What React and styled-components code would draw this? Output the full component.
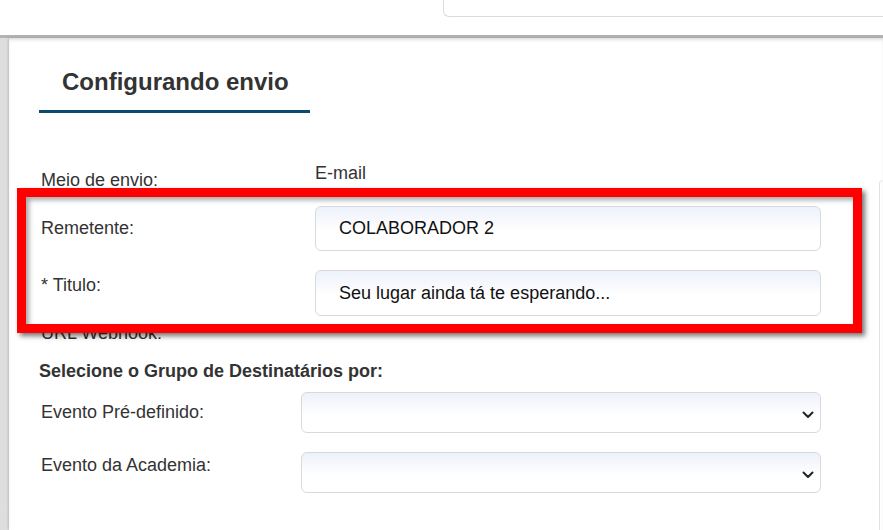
import styled, { createGlobalStyle } from 'styled-components'

const GlobalStyle = createGlobalStyle`
    html, body {
        margin: 0;
        padding: 0;
        background: #ffffff;
        font-family: "Liberation Sans", Arial, sans-serif;
        overflow: hidden;
    }
`;

function Chevron() {
    return (
        <svg width="12" height="8" viewBox="0 0 12 8">
            <path d="M1.5 1.5 L6 6 L10.5 1.5" fill="none" stroke="#222" strokeWidth="2" strokeLinecap="round" strokeLinejoin="round" />
        </svg>
    )
}

function App() {
    return (
        <Page>
            <GlobalStyle />
            <TopBar>
                <TopBox />
            </TopBar>
            <Backdrop>
                <Panel>
                    <Content>
                        <Form>
                            <TitleTab>Configurando envio</TitleTab>

                            <InfoRow>
                                <Label width={274} offset={7}>Meio de envio:</Label>
                                <Value>E-mail</Value>
                            </InfoRow>

                            <FieldRow gap={16}>
                                <Label width={274} offset={12}>Remetente:</Label>
                                <Field height={45}>COLABORADOR 2</Field>
                            </FieldRow>

                            <FieldRow gap={19}>
                                <Label width={274} offset={5}>* Titulo:</Label>
                                <Field height={46}>Seu lugar ainda tá te esperando...</Field>
                            </FieldRow>

                            <FieldRow gap={7}>
                                <Label width={274} offset={0}>URL Webhook:</Label>
                            </FieldRow>

                            <SectionTitle>Selecione o Grupo de Destinatários por:</SectionTitle>

                            <FieldRow gap={11}>
                                <Label width={260} offset={10}>Evento Pré-definido:</Label>
                                <Select>
                                    <Chevron />
                                </Select>
                            </FieldRow>

                            <FieldRow gap={19}>
                                <Label width={260} offset={3}>Evento da Academia:</Label>
                                <Select>
                                    <Chevron />
                                </Select>
                            </FieldRow>
                        </Form>
                        <SideEdge />
                    </Content>
                    <Highlight />
                </Panel>
            </Backdrop>
        </Page>
    )
}

export default App

const Page = styled.div`
    width: 883px;
    height: 530px;
    overflow: hidden;
    background: #ffffff;
`;

const TopBar = styled.div`
    height: 35px;
    display: flex;
    flex-direction: row;
    align-items: flex-start;
`;

const TopBox = styled.div`
    margin-left: 443px;
    flex: 1;
    height: 16px;
    border: 1px solid #dcdcdc;
    border-top: none;
    border-right: none;
    border-bottom-left-radius: 6px;
`;

const Backdrop = styled.div`
    border-top: 3px solid #b3b3b3;
    background: linear-gradient(to right, #dedede, #cfcfcf);
    padding-left: 9px;
    height: 492px;
`;

const Panel = styled.div`
    position: relative;
    background: #ffffff;
    height: 100%;
    box-shadow: inset 0 3px 4px -2px rgba(0, 0, 0, 0.18), -1px 0 2px rgba(0, 0, 0, 0.15);
`;

const Content = styled.div`
    display: flex;
    flex-direction: row;
`;

const Form = styled.div`
    flex: 1;
    display: flex;
    flex-direction: column;
    padding-left: 32px;
    padding-right: 58px;
    color: #333333;
`;

const SideEdge = styled.div`
    width: 3px;
    margin-top: 142px;
    height: 360px;
    border-left: 1px solid #e2e2e2;
    border-top: 1px solid #ececec;
    border-top-left-radius: 5px;
`;

const TitleTab = styled.div`
    margin-left: -2px;
    width: 248px;
    padding: 30px 0 14px 23px;
    font-size: 24px;
    line-height: 28px;
    font-weight: bold;
    color: #333333;
    border-bottom: 3px solid #0e4a6e;
`;

const InfoRow = styled.div`
    display: flex;
    flex-direction: row;
    align-items: flex-start;
    margin-top: 50px;
`;

const FieldRow = styled.div`
    display: flex;
    flex-direction: row;
    align-items: flex-start;
    margin-top: ${(props) => props.gap}px;
`;

const Label = styled.div`
    width: ${(props) => props.width}px;
    flex-shrink: 0;
    padding-top: ${(props) => props.offset}px;
    font-size: 18px;
    line-height: 20px;
    color: #333333;
`;

const Value = styled.div`
    font-size: 18px;
    line-height: 20px;
    color: #333333;
`;

const Field = styled.div`
    flex: 1;
    box-sizing: border-box;
    height: ${(props) => props.height}px;
    display: flex;
    align-items: center;
    padding-left: 23px;
    border: 1px solid #d6d9dd;
    border-radius: 6px;
    background: linear-gradient(to bottom, #edf1fa 0%, #ffffff 55%);
    font-size: 18px;
    color: #111111;
`;

const Select = styled.div`
    flex: 1;
    box-sizing: border-box;
    height: 41px;
    display: flex;
    align-items: center;
    justify-content: flex-end;
    padding-right: 6px;
    padding-top: 4px;
    border: 1px solid #d6d9dd;
    border-radius: 6px;
    background: linear-gradient(to bottom, #edf1fa 0%, #ffffff 55%);
`;

const SectionTitle = styled.div`
    margin-top: 18px;
    margin-left: -2px;
    font-size: 18px;
    line-height: 20px;
    font-weight: bold;
    color: #333333;
`;

const Highlight = styled.div`
    position: absolute;
    left: 8px;
    top: 150px;
    width: 845px;
    height: 145px;
    box-sizing: border-box;
    border: 9px solid #ff0000;
    box-shadow: 3px 3px 5px rgba(0, 0, 0, 0.55), inset 3px 3px 5px rgba(0, 0, 0, 0.35);
    pointer-events: none;
`;
